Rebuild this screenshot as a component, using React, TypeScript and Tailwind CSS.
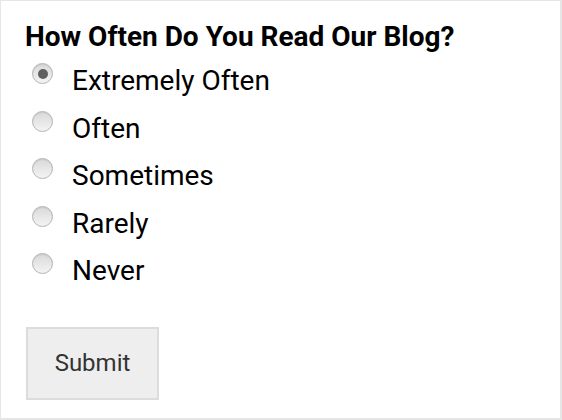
const options = ["Extremely Often", "Often", "Sometimes", "Rarely", "Never"];

function Radio({ checked }: { checked?: boolean }) {
  return (
    <span className="mt-[6.3px] ml-[7px] flex h-[21px] w-[21px] shrink-0 items-center justify-center rounded-full border border-[#b3b3b3] bg-gradient-to-b from-[#d9d9d9] to-[#f4f4f4] shadow-[inset_0_1px_1px_rgba(0,0,0,0.08)]">
      {checked && <span className="h-[10px] w-[10px] rounded-full bg-[#5f5f5f]" />}
    </span>
  );
}

export default function App() {
  return (
    <div
      className="box-border h-[420px] w-[562px] border-t border-l border-r-2 border-b-2 border-[#e6e6e6] bg-white pl-[24px] pt-[20px] text-black"
      style={{ fontFamily: "Roboto, 'Noto Sans', sans-serif" }}
    >
      <h2 className="text-[28px] font-bold leading-[32px]">How Often Do You Read Our Blog?</h2>
      <div className="mt-[4.2px] flex flex-col">
        {options.map((opt, i) => (
          <label key={opt} className="flex h-[47.5px] items-start gap-[19px]">
            <Radio checked={i === 0} />
            <span className="text-[28px] leading-[47.5px]">{opt}</span>
          </label>
        ))}
      </div>
      <button className="ml-[1px] mt-[32.3px] flex h-[73px] w-[133px] items-center justify-center border-2 border-[#dcdcdc] bg-[#eeeeee] text-[24px] text-[#333]">
        Submit
      </button>
    </div>
  );
}
